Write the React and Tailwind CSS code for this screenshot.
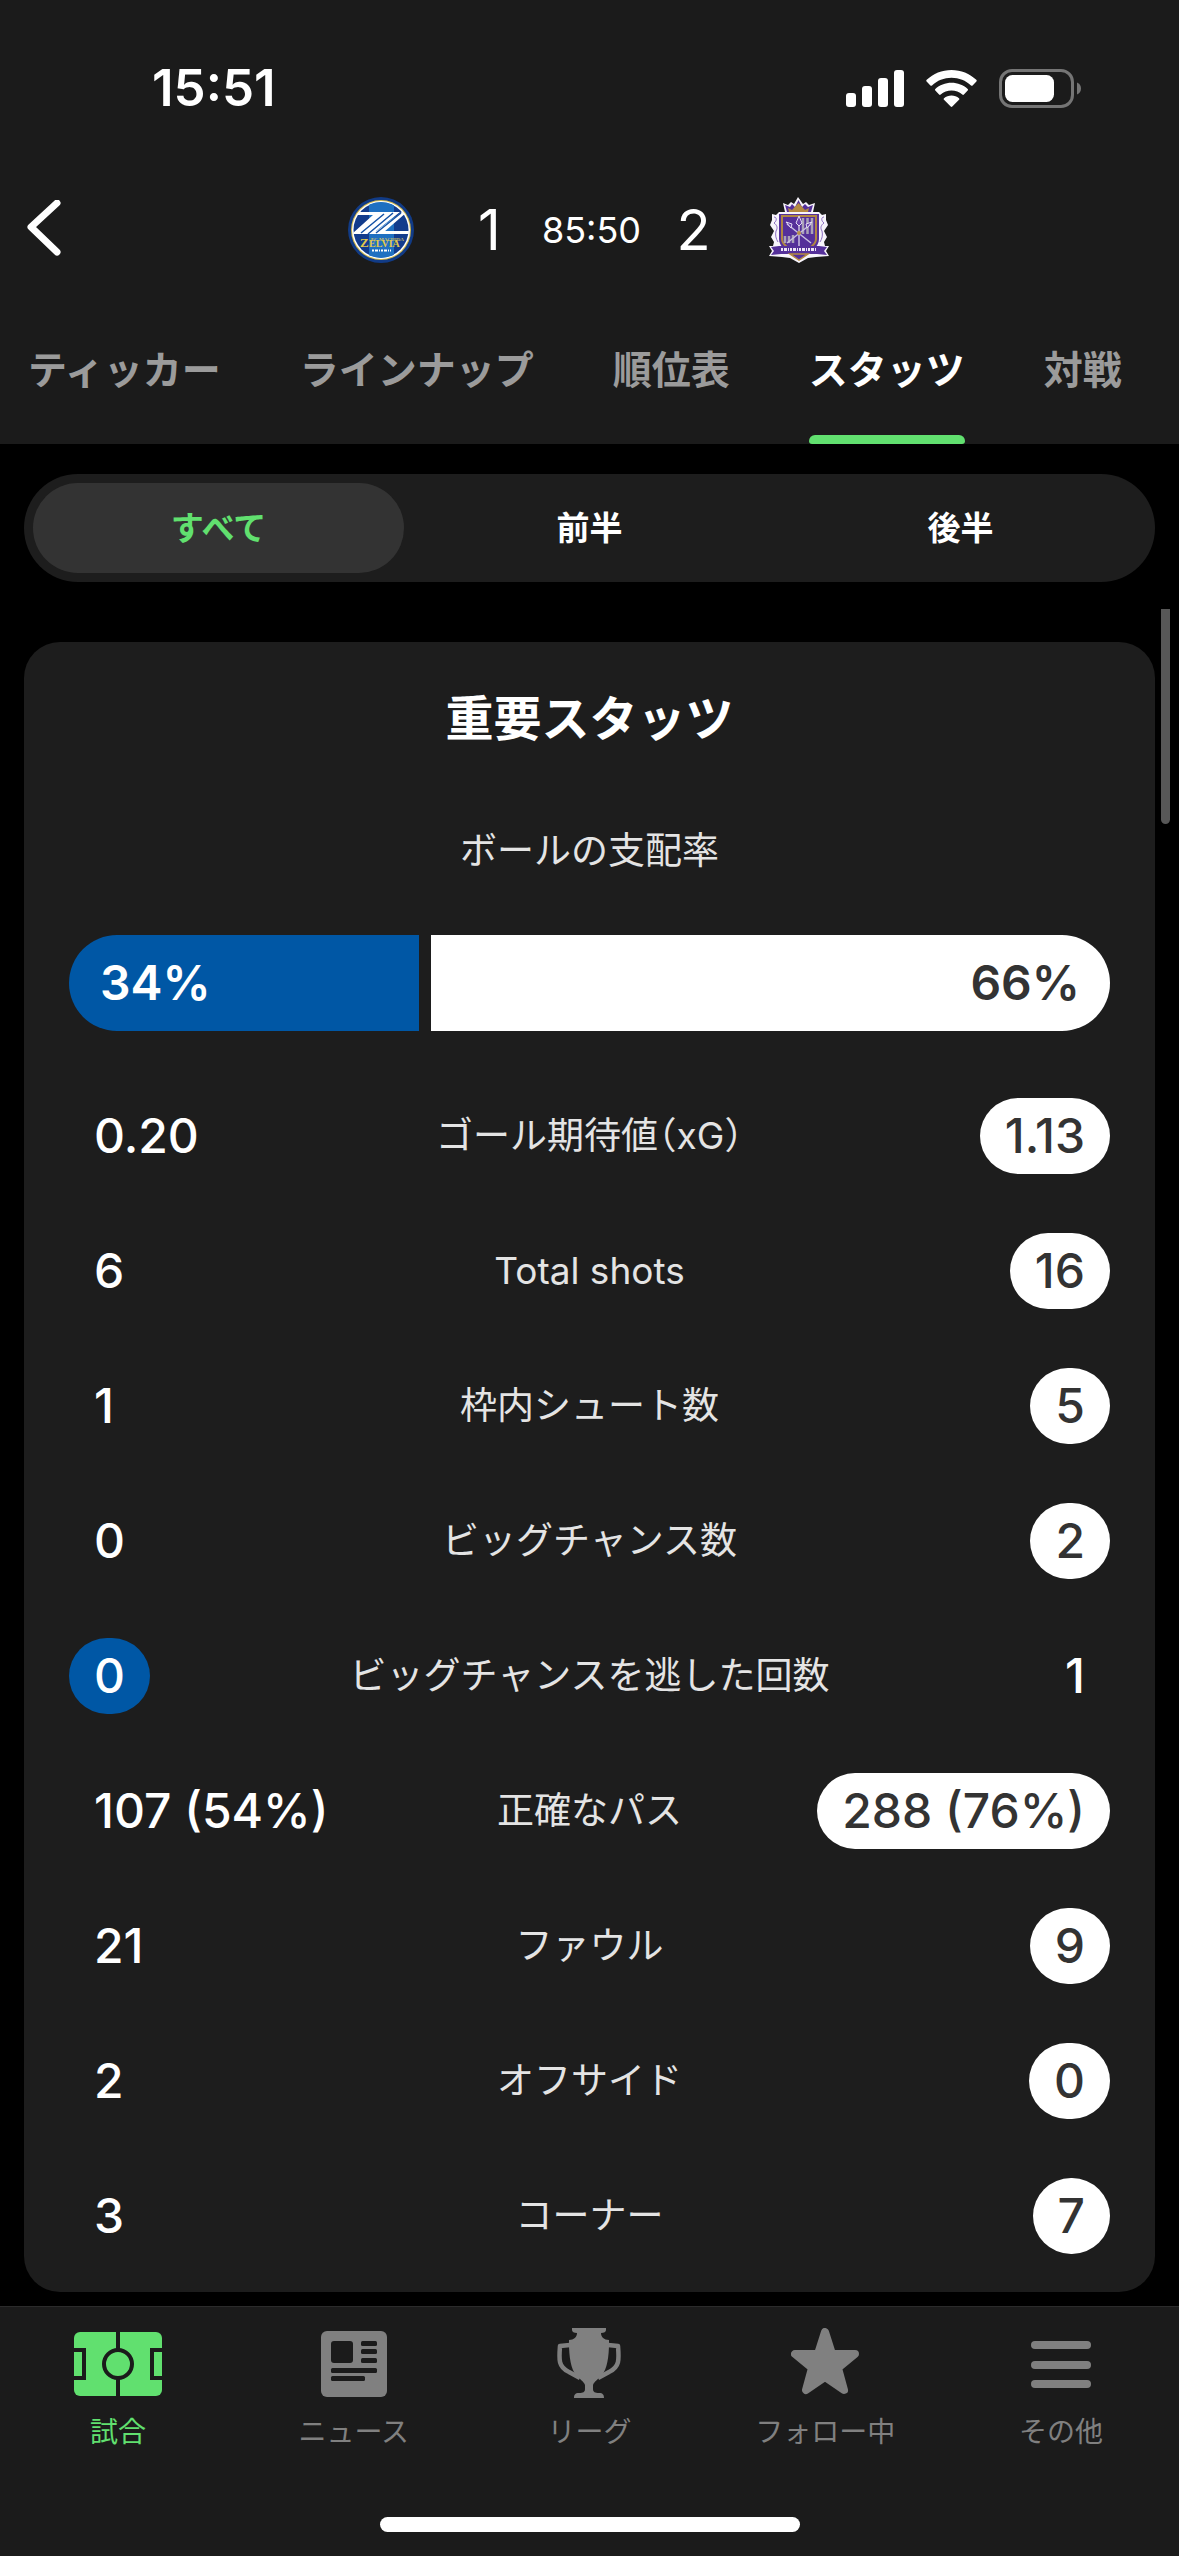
import React from "react";

const TABS = ["ティッカー", "ラインナップ", "順位表", "スタッツ", "対戦"];
const PERIODS = ["すべて", "前半", "後半"];

const STATS = [
  { label: "ゴール期待値（xG）", home: "0.20", away: "1.13", lead: "away" },
  { label: "Total shots", home: "6", away: "16", lead: "away" },
  { label: "枠内シュート数", home: "1", away: "5", lead: "away" },
  { label: "ビッグチャンス数", home: "0", away: "2", lead: "away" },
  { label: "ビッグチャンスを逃した回数", home: "0", away: "1", lead: "home" },
  { label: "正確なパス", home: "107 (54%)", away: "288 (76%)", lead: "away" },
  { label: "ファウル", home: "21", away: "9", lead: "away" },
  { label: "オフサイド", home: "2", away: "0", lead: "away" },
  { label: "コーナー", home: "3", away: "7", lead: "away" },
];

function SignalIcon() {
  return (
    <svg width="58" height="37" viewBox="0 0 58 37" fill="#fff" aria-hidden="true">
      <rect x="0" y="23" width="10" height="14" rx="3" />
      <rect x="16" y="16" width="10" height="21" rx="3" />
      <rect x="32" y="8" width="10" height="29" rx="3" />
      <rect x="48" y="0" width="10" height="37" rx="3" />
    </svg>
  );
}

function WifiIcon() {
  return (
    <svg width="51" height="37" viewBox="0 0 51 37" fill="#fff" aria-hidden="true">
      <path d="M25.5 0C35 0 43.8 3.7 50.3 9.8C50.9 10.4 50.9 11 50.4 11.5L46.6 15.4C46.1 15.9 45.5 15.9 45 15.4C39.8 10.5 33 7.7 25.5 7.7C18 7.7 11.2 10.5 6 15.4C5.5 15.9 4.9 15.9 4.4 15.4L.6 11.5C.1 11 .1 10.4 .7 9.8C7.2 3.7 16 0 25.5 0Z" />
      <path d="M25.5 12.8C31.7 12.8 37.4 15.1 41.7 19C42.2 19.5 42.2 20.1 41.7 20.6L37.9 24.5C37.4 25 36.8 25 36.3 24.5C33.4 21.9 29.6 20.4 25.5 20.4C21.4 20.4 17.6 21.9 14.7 24.5C14.2 25 13.6 25 13.1 24.5L9.3 20.6C8.8 20.1 8.8 19.5 9.3 19C13.6 15.1 19.3 12.8 25.5 12.8Z" />
      <path d="M25.5 25.6C28.3 25.6 30.9 26.6 33 28.3C33.5 28.8 33.5 29.3 33 29.8L26.3 36.6C25.8 37.1 25.2 37.1 24.7 36.6L18 29.8C17.5 29.3 17.5 28.8 18 28.3C20.1 26.6 22.7 25.6 25.5 25.6Z" />
    </svg>
  );
}

function BatteryIcon() {
  return (
    <svg width="82" height="39" viewBox="0 0 82 39" aria-hidden="true">
      <rect x="1.5" y="1.5" width="72" height="36" rx="11.5" fill="none" stroke="#757575" strokeWidth="3" />
      <rect x="6" y="6" width="49" height="27" rx="7.5" fill="#fff" />
      <path d="M78 13.5C80.5 14.5 82 16.8 82 19.5S80.5 24.5 78 25.5Z" fill="#757575" />
    </svg>
  );
}

function HomeCrest() {
  return (
    <svg width="66" height="66" viewBox="0 0 66 66" role="img" aria-label="FC Machida Zelvia">
      <clipPath id="home-disc">
        <circle cx="33" cy="33" r="28" />
      </clipPath>
      <circle cx="33" cy="33" r="33" fill="#113b86" />
      <circle cx="33" cy="33" r="30" fill="#d3b84b" />
      <circle cx="33" cy="33" r="29" fill="#fff" />
      <circle cx="33" cy="33" r="27.5" fill="#133c8c" />
      <g clipPath="url(#home-disc)">
        <rect x="21" y="4" width="25" height="58" fill="#1f70c1" />
        <path d="M8 15H52L28 34H62V37H4L25 18H10Z" fill="#fff" />
        <path d="M54 15H59L36 35H27Z" fill="#fff" />
        <path d="M36 17L13 36M45 16L20 37M53 16L28 36" stroke="#1552a5" strokeWidth="1.5" />
      </g>
      <text x="23" y="44" fill="#cfc069" fontSize="5" fontWeight="700" fontFamily="Liberation Serif, serif">
        FC MACHIDA
      </text>
      <text x="12" y="50" fill="#e2c94b" fontSize="13" fontWeight="700" fontFamily="Liberation Serif, serif">
        Z
      </text>
      <text x="21" y="50" fill="#e2c94b" fontSize="10" fontWeight="700" fontFamily="Liberation Serif, serif">
        ELVIA
      </text>
      <path d="M24 53.5H43" stroke="#fff" strokeWidth="2" strokeDasharray="2 1 3 1 1 1" />
    </svg>
  );
}

function AwayCrest() {
  return (
    <svg width="60" height="66" viewBox="0 0 60 66" role="img" aria-label="Sanfrecce Hiroshima">
      <path d="M14 6L19 8L22 5L25 7L29 0L34 7L37 5L40 8L46 6L44 15H50L53 18L57 17L57 23L59 28L55 34L58 40L55 45L56 49H60L57 54L60 59L47 60L39 61L30 66L21 61L13 60L0 59L3 54L0 49H4L5 45L2 40L5 34L1 28L3 23L3 17L7 18L10 15H16Z" fill="#f7f4fb" />
      <path d="M16 8L21 10L23 7L26 10L29.5 3L33 10L36 7L39 10L44 8L42 15H18Z" fill="#55309a" />
      <path d="M19 11L23 13L29.5 6L36 13L40 11L39 15H20Z" fill="#b58a42" />
      <path d="M10 17H50V42C50 51 39 57 30 61C21 57 10 51 10 42Z" fill="#55309a" />
      <path d="M13 19H47V42C47 48 38 53 30 56C22 53 13 48 13 42Z" fill="none" stroke="#b08643" strokeWidth="2" />
      <path d="M34 21V37M38.5 21V37M43 21V37M16 39V46M20 39V46M24 38V46" stroke="#aaa2b8" strokeWidth="2.5" />
      <path d="M30 20V49M18 27L42 46M42 27L18 46" stroke="#c9bfe0" strokeWidth="1.5" />
      <path d="M30 19L27 26L30 29L33 26ZM17 25L23 27L22 31ZM43 25L37 27L38 31Z" fill="#6940ad" stroke="#e4dcf4" strokeWidth="1" />
      <circle cx="30" cy="36" r="2" fill="#b99149" />
      <path d="M5 20C8 20 8 24 5 26C8 28 9 31 7 34C6 38 7 42 9 45M55 20C52 20 52 24 55 26C52 28 51 31 53 34C54 38 53 42 51 45" fill="none" stroke="#8a6dc0" strokeWidth="1" />
      <path d="M2 50L10 49H50L58 50L55 54L58 58L48 57H12L2 58L5 54Z" fill="#55309a" />
      <path d="M12 52.5H48" stroke="#eee8f7" strokeWidth="3" strokeDasharray="2 1 3 1 1 1" />
      <path d="M21 57H39L30 63Z" fill="#55309a" stroke="#b58a42" strokeWidth="1.5" />
    </svg>
  );
}

function PitchIcon() {
  return (
    <svg width="88" height="70" viewBox="0 0 88 70" aria-hidden="true">
      <rect y="4" width="88" height="64" rx="6" fill="#61e06f" />
      <g fill="none" stroke="#1b1b1b" strokeWidth="4">
        <path d="M44 3V22M44 50V69" />
        <circle cx="44" cy="36" r="14" />
        <path d="M-2 22H10V50H-2M90 22H78V50H90" />
      </g>
    </svg>
  );
}

function NewsIcon() {
  return (
    <svg width="66" height="70" viewBox="0 0 66 70" aria-hidden="true">
      <rect y="3" width="66" height="66" rx="6" fill="#808080" />
      <g fill="#1b1b1b">
        <rect x="10" y="13" width="22" height="22" rx="3" />
        <rect x="40" y="13" width="16" height="5" rx="1.5" />
        <rect x="40" y="21" width="16" height="5" rx="1.5" />
        <rect x="40" y="30" width="16" height="5" rx="1.5" />
        <rect x="10" y="40" width="46" height="5" rx="1.5" />
        <rect x="10" y="48" width="34" height="5" rx="1.5" />
      </g>
    </svg>
  );
}

function TrophyIcon() {
  return (
    <svg width="64" height="70" viewBox="0 0 64 70" aria-hidden="true">
      <path d="M15 0H49V2C49 4 47 5 44 5C44 9 47 12 52 12V15C52 29 50 41 45 47C41 51 37 54 36 57V61C36 64 38 65 42 65C46 65 47 67 47 70H17C17 67 18 65 22 65C26 65 28 64 28 61V57C27 54 23 51 19 47C14 41 12 29 12 15V12C17 12 20 9 20 5C17 5 15 4 15 2Z" fill="#808080" />
      <path d="M13 17L3 18C2 31 1 39 12 44L23 50M51 17L61 18C62 31 63 39 52 44L41 50" fill="none" stroke="#808080" strokeWidth="4.5" strokeLinejoin="round" />
    </svg>
  );
}

function StarIcon() {
  return (
    <svg width="68" height="70" viewBox="0 0 68 70" aria-hidden="true">
      <path d="M34 4L41 26H64L47 40L53 62L34 49L15 62L21 40L4 26H27Z" fill="#808080" stroke="#808080" strokeWidth="8" strokeLinejoin="round" />
    </svg>
  );
}

function MenuIcon() {
  return (
    <svg width="60" height="70" viewBox="0 0 60 70" fill="#808080" aria-hidden="true">
      <rect y="13" width="60" height="8" rx="4" />
      <rect y="33" width="60" height="8" rx="4" />
      <rect y="52" width="60" height="8" rx="4" />
    </svg>
  );
}

const NAV = [
  { label: "試合", Icon: PitchIcon, active: true },
  { label: "ニュース", Icon: NewsIcon },
  { label: "リーグ", Icon: TrophyIcon },
  { label: "フォロー中", Icon: StarIcon },
  { label: "その他", Icon: MenuIcon },
];

function StatValue({ value, side, lead }) {
  const leading = side === lead;
  const tone = !leading ? "text-white" : side === "home" ? "bg-[#0057a5] text-white" : "bg-white text-[#333333]";
  return (
    <span
      className={`flex h-[76px] items-center rounded-[38px] px-[25px] text-[48px] leading-[56px] font-medium whitespace-nowrap ${tone} ${
        side === "home" ? "justify-self-start" : "justify-self-end"
      }`}
    >
      {value}
    </span>
  );
}

function StatusBar() {
  return (
    <div className="flex h-[176px] items-center justify-between pr-[98px] pl-[152px]">
      <span className="text-[51px] leading-[60px] font-semibold">15:51</span>
      <div className="flex items-center gap-[22px]">
        <SignalIcon />
        <WifiIcon />
        <BatteryIcon />
      </div>
    </div>
  );
}

function MatchHeader() {
  return (
    <div className="grid h-[108px] grid-cols-[1fr_auto_1fr] items-center px-[27px]">
      <button type="button" aria-label="戻る" className="justify-self-start">
        <svg width="34" height="60" viewBox="0 0 34 60" fill="none" aria-hidden="true">
          <path d="M30 3L4 27L30 52" stroke="#fff" strokeWidth="7" strokeLinecap="round" strokeLinejoin="round" />
        </svg>
      </button>
      <div className="flex items-center">
        <span className="flex w-[66px] justify-center">
          <HomeCrest />
        </span>
        <span className="ml-12 w-14 text-center text-[56px] leading-[64px]">1</span>
        <span className="w-[148px] text-center text-[36px] leading-[44px]">85:50</span>
        <span className="mr-11 w-14 text-center text-[56px] leading-[64px]">2</span>
        <span className="flex w-[66px] justify-center">
          <AwayCrest />
        </span>
      </div>
    </div>
  );
}

export default function App() {
  return (
    <div className="flex min-h-screen flex-col bg-black font-['Inter','Noto_Sans_CJK_JP',sans-serif] text-white">
      <header className="bg-[#1b1b1b]">
        <StatusBar />
        <MatchHeader />
        <nav className="flex h-40 gap-[79px] overflow-hidden pl-[28px]">
          {TABS.map((tab) => {
            const active = tab === "スタッツ";
            return (
              <button
                key={tab}
                type="button"
                className={`flex shrink-0 flex-col justify-between text-[39px] leading-[48px] font-bold whitespace-nowrap ${
                  active ? "text-white" : "text-[#9b9b9b]"
                }`}
              >
                <span className="pt-[62px]">{tab}</span>
                <span className={`h-[9px] w-full rounded-t-lg rounded-b-sm ${active ? "bg-[#61e06f]" : ""}`} />
              </button>
            );
          })}
        </nav>
      </header>

      <main className="relative flex-1 px-6 pt-[30px] pb-[13px]">
        <div className="grid grid-cols-3 rounded-full bg-[#1d1d1d] p-[9px]">
          {PERIODS.map((period, i) => (
            <button
              key={period}
              type="button"
              aria-pressed={i === 0}
              className={`h-[90px] rounded-full text-[33px] leading-[40px] font-bold ${
                i === 0 ? "bg-[#333333] text-[#61e06f]" : "text-white"
              }`}
            >
              {period}
            </button>
          ))}
        </div>

        <div className="absolute top-[165px] right-[9px] h-[215px] w-[9px] rounded-b-full bg-[#575757]" />

        <section className="mt-[60px] rounded-[36px] bg-[#1d1d1d] px-[45px] pt-[47px] pb-[38px]">
          <h2 className="text-center text-[48px] leading-[60px] font-bold">重要スタッツ</h2>
          <h3 className="mt-[78px] text-center text-[37px] leading-[48px] text-[#e4e4e4]">ボールの支配率</h3>
          <div className="mt-[60px] grid h-24 grid-cols-[34fr_66fr] gap-3 text-[48px] leading-[56px] font-semibold">
            <div className="flex items-center rounded-l-full bg-[#0057a5] pl-[31px]">34%</div>
            <div className="flex items-center justify-end rounded-r-full bg-white pr-[30px] text-[#333333]">66%</div>
          </div>
          <ul className="mt-[67px] flex flex-col gap-[59px]">
            {STATS.map((s) => (
              <li key={s.label} className="grid grid-cols-[1fr_auto_1fr] items-center">
                <StatValue value={s.home} side="home" lead={s.lead} />
                <span className="text-[37px] leading-[48px] whitespace-nowrap text-[#e4e4e4] [font-feature-settings:'halt']">
                  {s.label}
                </span>
                <StatValue value={s.away} side="away" lead={s.lead} />
              </li>
            ))}
          </ul>
        </section>
      </main>

      <footer className="border-t border-[#2b2b2b] bg-[#1b1b1b] pt-[21px] pb-6">
        <nav className="grid grid-cols-5">
          {NAV.map(({ label, Icon, active }) => (
            <a
              key={label}
              href="#"
              className={`flex flex-col items-center gap-4 text-[28px] leading-[36px] ${
                active ? "text-[#61e06f]" : "text-[#808080]"
              }`}
            >
              <Icon />
              {label}
            </a>
          ))}
        </nav>
        <div className="mx-auto mt-[67px] h-[15px] w-[420px] rounded-full bg-white" />
      </footer>
    </div>
  );
}
